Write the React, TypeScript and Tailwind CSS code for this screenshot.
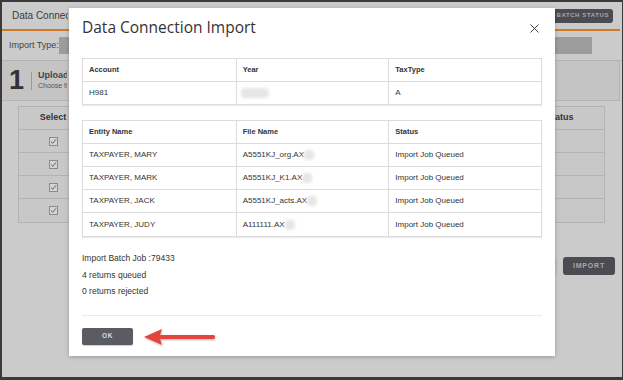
import React from "react";
import { X } from "lucide-react";

const Check = () => (
  <div className="w-[9px] h-[9px] border border-[#8a8a8a] bg-[#d4d4d4] flex items-center justify-center">
    <svg width="7" height="7" viewBox="0 0 7 7">
      <path d="M1 3.6 L2.8 5.3 L6 1.3" fill="none" stroke="#555" strokeWidth="0.9" />
    </svg>
  </div>
);

const Blur = ({ w }: { w: number }) => (
  <span
    className="inline-block h-[10px] align-middle bg-[#e6e6e6] blur-[1.5px] rounded-sm"
    style={{ width: w }}
  />
);

const rows = [
  { name: "TAXPAYER, MARY", file: "A5551KJ_org.AX" },
  { name: "TAXPAYER, MARK", file: "A5551KJ_K1.AX" },
  { name: "TAXPAYER, JACK", file: "A5551KJ_acts.AX" },
  { name: "TAXPAYER, JUDY", file: "A111111.AX" },
];

export default function App() {
  return (
    <div className="relative w-[623px] h-[380px] overflow-hidden bg-[#cbcbcb] border-t-2 border-l-2 border-b-[3px] border-r border-[#3a3a3a] font-['Liberation_Sans',Arial,sans-serif] text-[#333]">
      {/* background page (dimmed) */}
      <div className="h-[27px] flex items-center justify-between pl-[10px] pr-[9px]">
        <span className="w-[56px] overflow-hidden whitespace-nowrap text-[10px] text-[#3a3a3a]">Data Connecti</span>
        <div className="h-[14px] px-[4px] rounded-[3px] bg-[#4b4b51] flex items-center text-[6px] font-bold tracking-[0.6px] text-[#a9a9ad]">
          BATCH STATUS
        </div>
      </div>
      <div className="h-[2px] bg-[#d17a25] mr-[2px]" />
      <div className="h-[30px] flex items-center pl-[7px] border-b border-[#b2b2b2]">
        <span className="text-[9px] text-[#444] w-[50px]">Import Type:</span>
        <div className="w-[533px] h-[17px] bg-[#9c9c9c]" />
      </div>
      <div className="h-[40px] flex items-center bg-[#c4c4c4] border-b border-r border-[#b4b4b4] mr-[2px]">
        <span className="w-[29px] text-center text-[27px] font-bold text-[#333] leading-none">1</span>
        <div className="w-px h-[18px] bg-[#999] mr-[6px]" />
        <div className="flex flex-col w-[29px] overflow-hidden whitespace-nowrap">
          <span className="text-[9px] font-bold text-[#444] leading-[11px]">Upload</span>
          <span className="text-[7px] text-[#555] leading-[10px]">Choose fi</span>
        </div>
      </div>
      <div className="ml-[16px] mt-[5px] w-[587px] border border-[#b3b3b3] bg-[#c8c8c8]">
        <div className="h-[23px] flex items-center border-b border-[#b3b3b3]">
          <div className="w-[68px] text-center text-[9px] font-bold text-[#333]">Select</div>
          <div className="flex-1" />
          <div className="w-[58px] text-[9px] font-bold text-[#333]">Status</div>
        </div>
        {[0, 1, 2, 3].map((i) => (
          <div key={i} className={`h-[23px] flex items-center ${i < 3 ? "border-b border-[#b3b3b3]" : ""}`}>
            <div className="w-[68px] flex justify-center">
              <Check />
            </div>
          </div>
        ))}
      </div>
      <div className="mt-[34px] flex justify-end gap-[6px] pr-[7px]">
        <div className="w-[50px] h-[18px] rounded-[3px] border border-[#bdbdbd] bg-[#c6c6c6]" />
        <div className="w-[52px] h-[18px] rounded-[3px] bg-[#4b4b51] flex items-center justify-center text-[7px] font-bold tracking-[0.8px] text-[#a9a9ad]">
          IMPORT
        </div>
      </div>

      {/* modal */}
      <div className="absolute left-[67px] top-[6px] w-[486px] h-[348px] bg-white shadow-[0_1px_4px_rgba(0,0,0,0.25)] px-[13px]">
        <div className="h-[40px] flex items-center justify-between">
          <span className="text-[15.5px] text-[#333] font-['Open_Sans',sans-serif]">Data Connection Import</span>
          <X size={15} strokeWidth={1.5} className="text-[#333]" />
        </div>
        <div className="mt-[10px] border border-[#dcdcdc] shadow-[0_1px_1px_rgba(0,0,0,0.08)]">
          <div className="h-[23px] grid grid-cols-3 border-b border-[#dcdcdc] text-[7.5px] font-bold text-[#333]">
            <div className="flex items-center px-[6px]">Account</div>
            <div className="flex items-center px-[6px] border-l border-[#dcdcdc]">Year</div>
            <div className="flex items-center px-[6px] border-l border-[#dcdcdc]">TaxType</div>
          </div>
          <div className="h-[22px] grid grid-cols-3 text-[8px] text-[#333]">
            <div className="flex items-center px-[6px]">H981</div>
            <div className="flex items-center px-[4px] border-l border-[#dcdcdc]">
              <Blur w={28} />
            </div>
            <div className="flex items-center px-[6px] border-l border-[#dcdcdc]">A</div>
          </div>
        </div>
        <div className="mt-[15px] border border-[#dcdcdc] shadow-[0_1px_1px_rgba(0,0,0,0.08)]">
          <div className="h-[23px] grid grid-cols-3 border-b border-[#dcdcdc] text-[7.5px] font-bold text-[#333]">
            <div className="flex items-center px-[6px]">Entity Name</div>
            <div className="flex items-center px-[6px] border-l border-[#dcdcdc]">File Name</div>
            <div className="flex items-center px-[6px] border-l border-[#dcdcdc]">Status</div>
          </div>
          {rows.map((r, i) => (
            <div
              key={r.name}
              className={`h-[23px] grid grid-cols-3 text-[8px] text-[#333] ${i < 3 ? "border-b border-[#dcdcdc]" : ""}`}
            >
              <div className="flex items-center px-[6px]">{r.name}</div>
              <div className="flex items-center px-[6px] border-l border-[#dcdcdc]">
                {r.file}
                <Blur w={10} />
              </div>
              <div className="flex items-center px-[6px] border-l border-[#dcdcdc]">Import Job Queued</div>
            </div>
          ))}
        </div>
        <div className="mt-[13px] text-[8.5px] leading-[16.5px] text-[#333]">
          <div>Import Batch Job :79433</div>
          <div>4 returns queued</div>
          <div>0 returns rejected</div>
        </div>
        <div className="mt-[15px] border-t border-[#ebebeb]" />
        <div className="mt-[12px] w-[51px] h-[17px] rounded-[2px] bg-[#5b5b63] shadow-[0_1px_1px_rgba(0,0,0,0.2)] flex items-center justify-center text-[6.5px] font-bold tracking-[0.6px] text-[#dcdce0]">
          OK
        </div>
      </div>

      {/* red arrow */}
      <svg className="absolute left-[138px] top-[324px]" width="80" height="24" viewBox="0 0 80 24">
        <defs>
          <filter id="sh" x="-10%" y="-30%" width="130%" height="160%">
            <feDropShadow dx="0.5" dy="1" stdDeviation="0.8" floodColor="#000" floodOpacity="0.3" />
          </filter>
        </defs>
        <g filter="url(#sh)">
          <path d="M4 11 L22 3 L20 9 L74 9 Q76 11 74 13 L20 13 L22 19 Z" fill="#e2443c" />
        </g>
      </svg>
    </div>
  );
}
